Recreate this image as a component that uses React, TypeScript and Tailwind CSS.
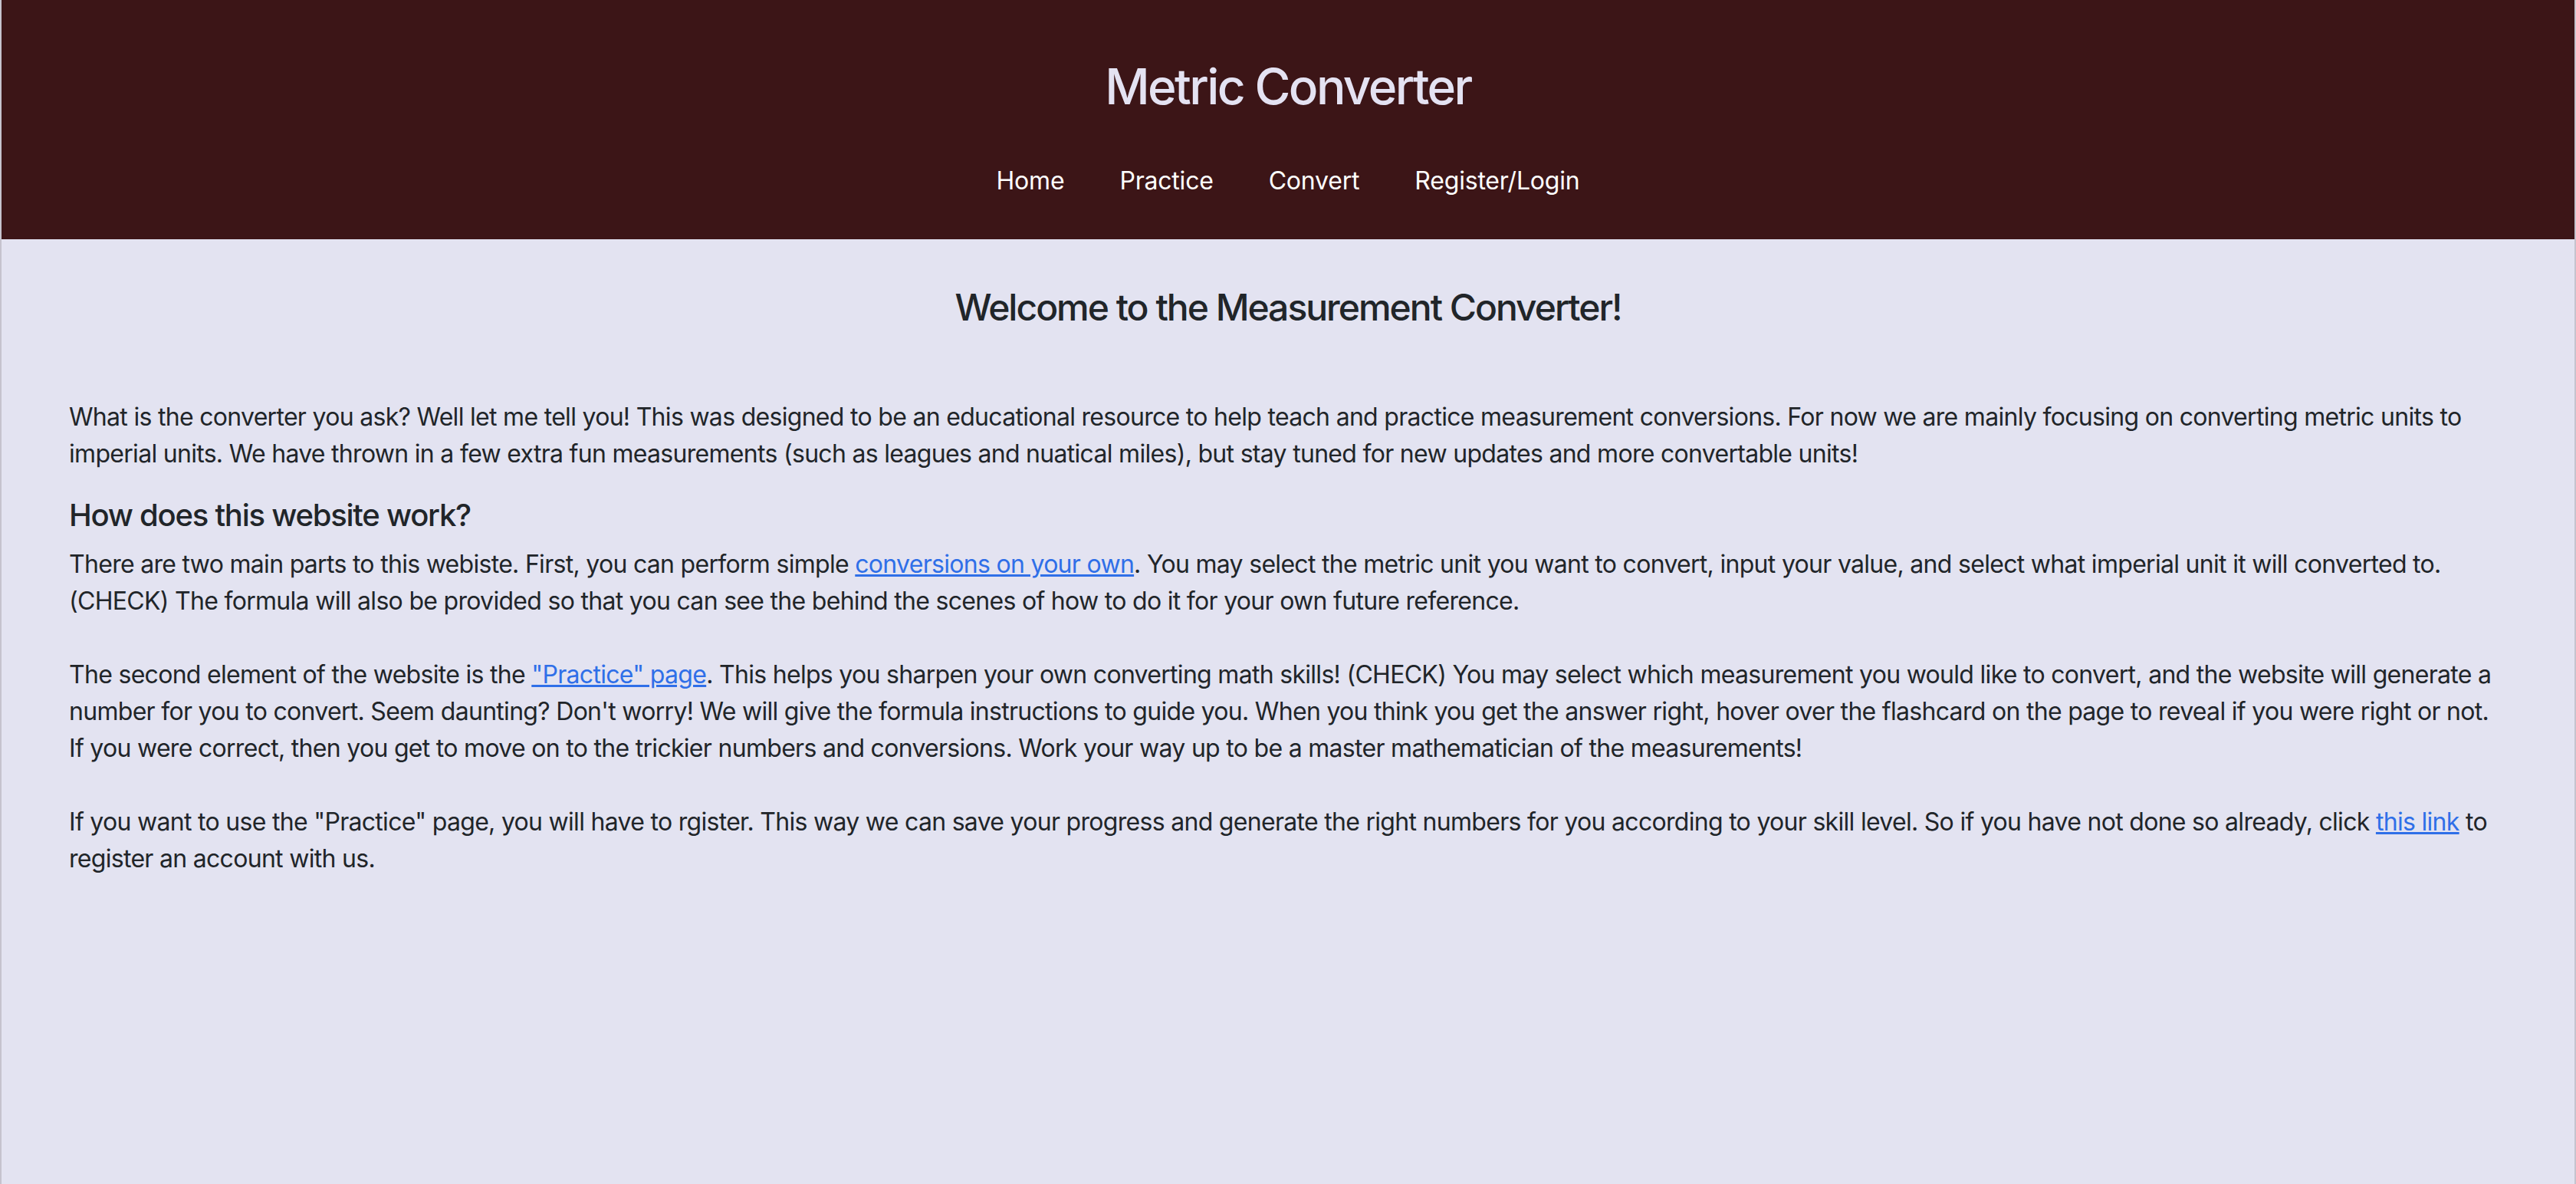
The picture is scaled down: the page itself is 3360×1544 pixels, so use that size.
import React from "react";

export default function App() {
  const font = { fontFamily: "Inter, 'Noto Sans', 'Liberation Sans', sans-serif" };
  return (
    <div className="min-h-screen bg-[#e3e3f1] text-[#212529] border-x-2 border-[#b3adb8]/60" style={font}>
      <header className="h-[312px] bg-[#3c1517] flex flex-col items-center">
        <h1 className="mt-[74px] text-[64px] leading-[77px] font-medium tracking-[-2.6px] text-[#e4e2f2]">Metric Converter</h1>
        <nav className="mt-[45px] flex">
          {["Home", "Practice", "Convert", "Register/Login"].map((t) => (
            <a key={t} href="#" className="px-[36px] py-[16px] text-[32px] leading-[48px] tracking-[-0.2px] text-white">
              {t}
            </a>
          ))}
        </nav>
      </header>
      <main className="px-[88px]">
        <h4 className="mt-[60px] text-center text-[48px] leading-[58px] font-medium tracking-[-2px]">Welcome to the Measurement Converter!</h4>
        <p className="mt-[90px] mb-[32px] text-[32px] leading-[48px] tracking-[-0.7px]">
          What is the converter you ask? Well let me tell you! This was designed to be an educational resource to help teach and practice measurement conversions. For now we are mainly focusing on converting metric units to imperial units. We have thrown in a few extra fun measurements (such as leagues and nuatical miles), but stay tuned for new updates and more convertable units!
        </p>
        <h5 className="mb-[16px] text-[40px] leading-[48px] font-medium tracking-[-1.25px]">How does this website work?</h5>
        <p className="text-[32px] leading-[48px] tracking-[-0.7px]">
          There are two main parts to this webiste. First, you can perform simple{" "}
          <a href="#" className="text-[#2f6fe8] underline">conversions on your own</a>. You may select the metric unit you want to convert, input your value, and select what imperial unit it will converted to. (CHECK) The formula will also be provided so that you can see the behind the scenes of how to do it for your own future reference.
          <br />
          <br />
          The second element of the website is the{" "}
          <a href="#" className="text-[#2f6fe8] underline">"Practice" page</a>. This helps you sharpen your own converting math skills! (CHECK) You may select which measurement you would like to convert, and the website will generate a number for you to convert. Seem daunting? Don't worry! We will give the formula instructions to guide you. When you think you get the answer right, hover over the flashcard on the page to reveal if you were right or not. If you were correct, then you get to move on to the trickier numbers and conversions. Work your way up to be a master mathematician of the measurements!
          <br />
          <br />
          If you want to use the "Practice" page, you will have to rgister. This way we can save your progress and generate the right numbers for you according to your skill level. So if you have not done so already, click{" "}
          <a href="#" className="text-[#2f6fe8] underline">this link</a> to register an account with us.
        </p>
      </main>
    </div>
  );
}
